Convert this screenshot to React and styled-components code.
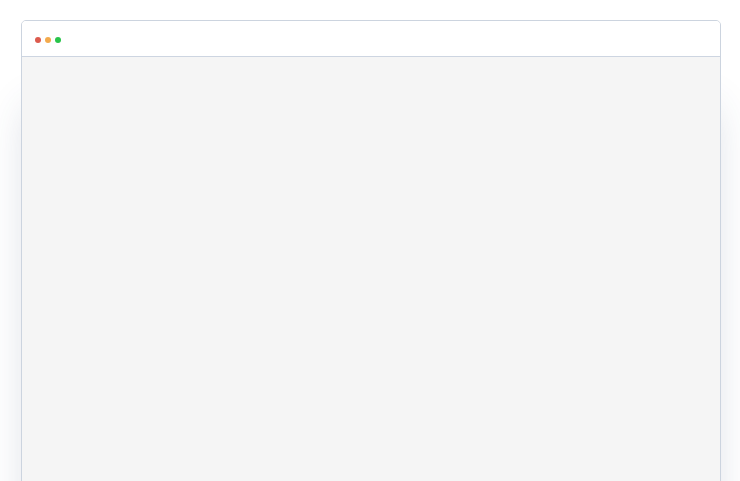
import React from "react";
import styled, { createGlobalStyle } from "styled-components";

const GlobalStyle = createGlobalStyle`
  html, body {
    margin: 0;
    padding: 0;
    background: #ffffff;
    font-family: "Liberation Sans", Arial, sans-serif;
    overflow: hidden;
  }
`;

const Page = styled.div`
  padding: 20px 19px 0 21px;
  height: 481px;
  box-sizing: border-box;
  overflow: hidden;
`;

const Window = styled.div`
  width: 700px;
  height: 560px;
  box-sizing: border-box;
  border: 1px solid #ccd4df;
  border-radius: 5px;
  background: #f5f5f5;
  overflow: hidden;
  display: flex;
  flex-direction: column;
  box-shadow: 0 80px 40px -8px rgba(50, 70, 110, 0.2);
`;

const TitleBar = styled.div`
  height: 36px;
  background: #ffffff;
  border-bottom: 1px solid #cdd5e1;
  display: flex;
  align-items: center;
  gap: 4px;
  padding: 2px 0 0 13px;
  box-sizing: border-box;
  flex-shrink: 0;
`;

const Dot = styled.span`
  width: 6px;
  height: 6px;
  border-radius: 50%;
  background: ${(p) => p.color};
`;

const Content = styled.div`
  flex: 1;
  background: #f5f5f5;
`;

export default function App() {
  return (
    <>
      <GlobalStyle />
      <Page>
        <Window>
          <TitleBar>
            <Dot color="#dc5b4d" />
            <Dot color="#f3aa4c" />
            <Dot color="#28c44a" />
          </TitleBar>
          <Content />
        </Window>
      </Page>
    </>
  );
}
